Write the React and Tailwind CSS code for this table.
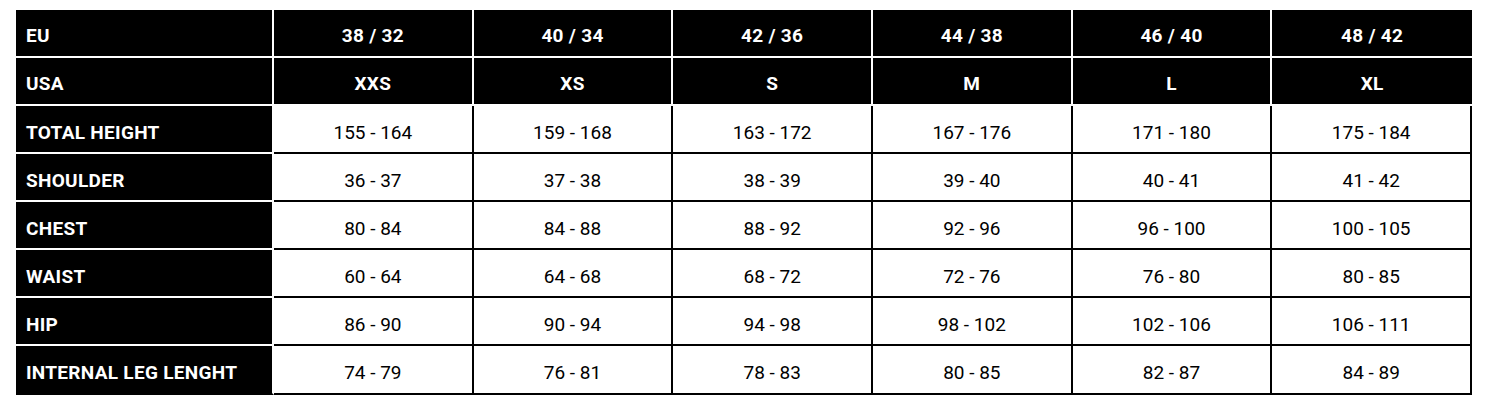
import React from "react";

const sizes = ["38 / 32", "40 / 34", "42 / 36", "44 / 38", "46 / 40", "48 / 42"];
const usa = ["XXS", "XS", "S", "M", "L", "XL"];
const rows = [
  ["TOTAL HEIGHT", ["155 - 164", "159 - 168", "163 - 172", "167 - 176", "171 - 180", "175 - 184"]],
  ["SHOULDER", ["36 - 37", "37 - 38", "38 - 39", "39 - 40", "40 - 41", "41 - 42"]],
  ["CHEST", ["80 - 84", "84 - 88", "88 - 92", "92 - 96", "96 - 100", "100 - 105"]],
  ["WAIST", ["60 - 64", "64 - 68", "68 - 72", "72 - 76", "76 - 80", "80 - 85"]],
  ["HIP", ["86 - 90", "90 - 94", "94 - 98", "98 - 102", "102 - 106", "106 - 111"]],
  ["INTERNAL LEG LENGHT", ["74 - 79", "76 - 81", "78 - 83", "80 - 85", "82 - 87", "84 - 89"]],
];

function HeadRow({ label, cells }) {
  return (
    <>
      <div className="h-[48px] bg-black border-r-2 border-b-2 border-white flex items-center pl-[10px] pt-[6px] text-white font-bold text-[19px] tracking-[0.3px]">
        {label}
      </div>
      {cells.map((c, i) => (
        <div
          key={i}
          className={
            i === cells.length - 1
              ? "h-[48px] bg-black border-b-2 border-white flex items-center justify-center pt-[6px] text-white font-bold text-[19px] tracking-[0.3px]"
              : "h-[48px] bg-black border-r-2 border-b-2 border-white flex items-center justify-center pt-[6px] text-white font-bold text-[19px] tracking-[0.3px]"
          }
        >
          {c}
        </div>
      ))}
    </>
  );
}

function DataRow({ label, cells, last }) {
  return (
    <>
      <div
        className={
          last
            ? "h-[49px] bg-black border-r-2 border-b-2 border-r-white border-b-black flex items-center pl-[10px] pt-[8px] text-white font-bold text-[19px] tracking-[0.3px]"
            : "h-[48px] bg-black border-r-2 border-b-2 border-white flex items-center pl-[10px] pt-[8px] text-white font-bold text-[19px] tracking-[0.3px]"
        }
      >
        {label}
      </div>
      {cells.map((c, i) => (
        <div
          key={i}
          className={
            last
              ? "h-[49px] bg-white border-r-2 border-b-2 border-black flex items-center justify-center pt-[8px] text-black text-[19px]"
              : "h-[48px] bg-white border-r-2 border-b-2 border-black flex items-center justify-center pt-[8px] text-black text-[19px]"
          }
        >
          {c}
        </div>
      ))}
    </>
  );
}

export default function App() {
  return (
    <div className="w-[1488px] h-[400px] bg-white pt-[10px] pl-[16px]" style={{ fontFamily: "Roboto, 'Liberation Sans', sans-serif" }}>
      <div className="w-[1456px] grid grid-cols-[258px_repeat(6,1fr)]">
        <HeadRow label="EU" cells={sizes} />
        <HeadRow label="USA" cells={usa} />
        {rows.map(([l, c], i) => (
          <DataRow key={l} label={l} cells={c} last={i === rows.length - 1} />
        ))}
      </div>
    </div>
  );
}
